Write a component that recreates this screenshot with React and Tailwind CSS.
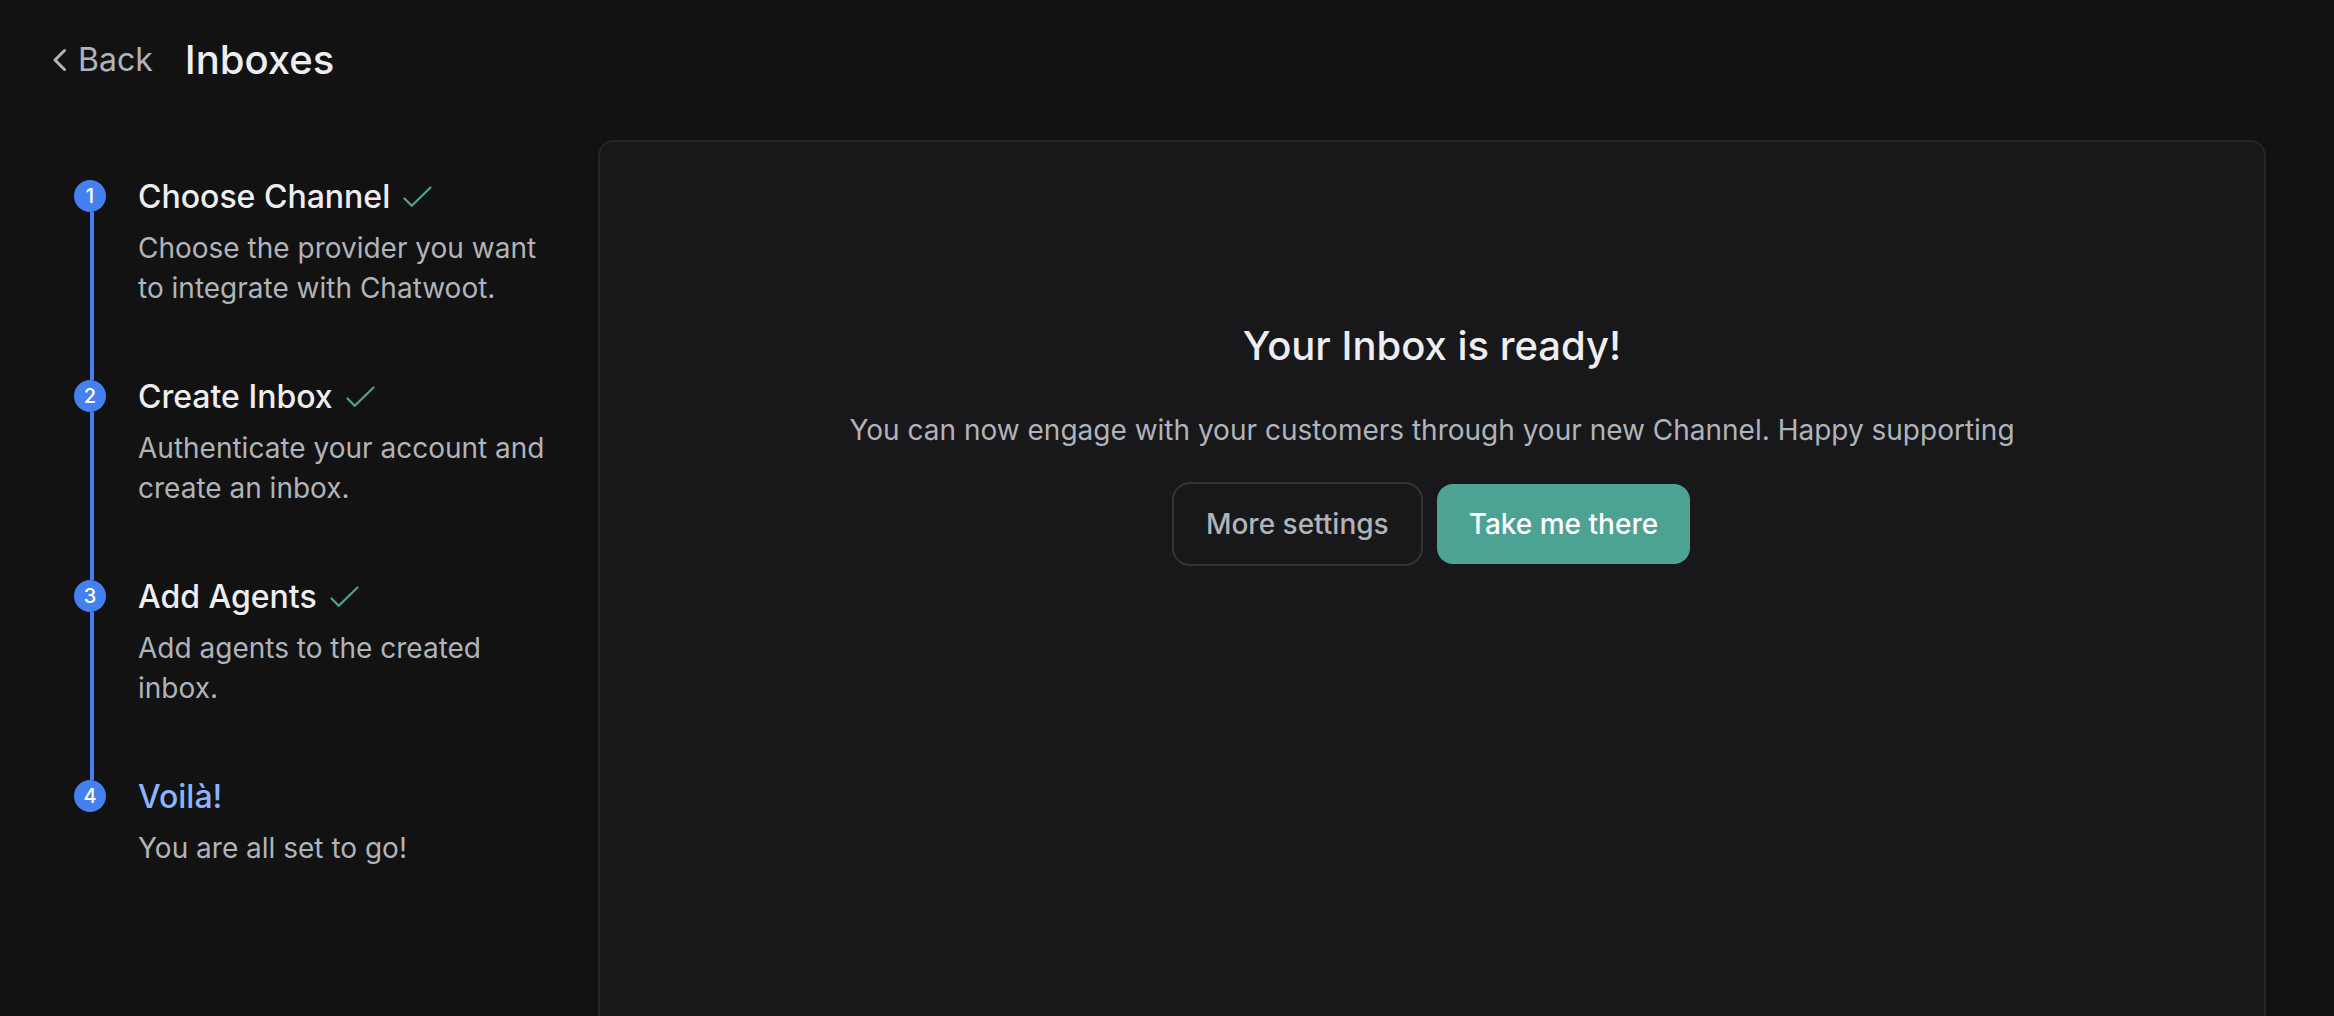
const steps = [
  { title: 'Choose Channel', body: 'Choose the provider you want to integrate with Chatwoot.', done: true },
  { title: 'Create Inbox', body: 'Authenticate your account and create an inbox.', done: true },
  { title: 'Add Agents', body: 'Add agents to the created inbox.', done: true },
  { title: 'Voilà!', body: 'You are all set to go!', done: false },
];

function ChevronLeft() {
  return (
    <svg className="h-8 w-6 shrink-0" viewBox="0 0 24 32" fill="none" stroke="currentColor" strokeWidth="3" strokeLinecap="round" strokeLinejoin="round" aria-hidden="true">
      <path d="M16.500 6.500 7 16l9.500 9.500" />
    </svg>
  );
}

function Check() {
  return (
    <svg className="h-8 w-8 shrink-0 text-[#4ca394]" viewBox="0 0 32 32" fill="none" stroke="currentColor" strokeWidth="2.250" strokeLinecap="round" strokeLinejoin="round" aria-label="Completed">
      <path d="M2.500 17.500 9.750 24.750 28.500 6.500" />
    </svg>
  );
}

function Step({ number, step, last }) {
  return (
    <li className="flex min-h-[200px] gap-8">
      <div className="flex w-8 shrink-0 flex-col">
        <span className="flex size-8 items-center justify-center rounded-full bg-[#4480f0] text-xl font-medium text-white">
          {number}
        </span>
        {!last && <span className="ml-4 w-1 grow bg-[#4480f0]" />}
      </div>
      <div className="min-w-0">
        <h3 className={last ? 'flex items-center gap-3 text-[32px] leading-[34px] font-medium text-[#8bb4ff]' : 'flex items-center gap-3 text-[32px] leading-[34px] font-medium text-[#eeeef0]'}>
          {step.title}
          {step.done && <Check />}
        </h3>
        <p className="mt-3.5 text-[28px] leading-10 text-[#b0b4ba]">{step.body}</p>
      </div>
    </li>
  );
}

export default function App() {
  return (
    <div className="flex h-screen flex-col overflow-hidden bg-[#121213] font-['Inter',sans-serif] [font-optical-sizing:none]">
      <header className="flex h-[120px] shrink-0 items-center gap-8 px-12">
        <button type="button" className="flex items-center gap-1.5 text-[32px] leading-10 text-[#b0b4ba]">
          <ChevronLeft />
          Back
        </button>
        <h1 className="text-[40px] leading-12 font-medium text-[#eeeef0]">Inboxes</h1>
      </header>
      <div className="flex min-h-0 grow pt-5 pr-17">
        <aside className="w-[598px] shrink-0 pt-10 pr-10 pl-[74px]">
          <ol>
            {steps.map((step, i) => (
              <Step key={step.title} number={i + 1} step={step} last={i === steps.length - 1} />
            ))}
          </ol>
        </aside>
        <main className="min-w-0 grow rounded-t-2xl border-2 border-b-0 border-[#26262a] bg-[#18181a] px-12 pt-[180px] text-center">
          <h2 className="text-[40px] leading-12 font-medium text-[#eeeef0]">Your Inbox is ready!</h2>
          <p className="mt-10 text-[28px] leading-10 text-[#b0b4ba]">
            You can now engage with your customers through your new Channel. Happy supporting
          </p>
          <div className="mt-[34px] flex items-center justify-center gap-4">
            <button type="button" className="h-20 rounded-2xl px-8 text-[28px] font-medium text-[#b0b4ba] outline-2 outline-[#343437]">
              More settings
            </button>
            <button type="button" className="h-20 rounded-2xl bg-[#4ca394] px-8 text-[28px] font-medium text-white">
              Take me there
            </button>
          </div>
        </main>
      </div>
    </div>
  );
}
